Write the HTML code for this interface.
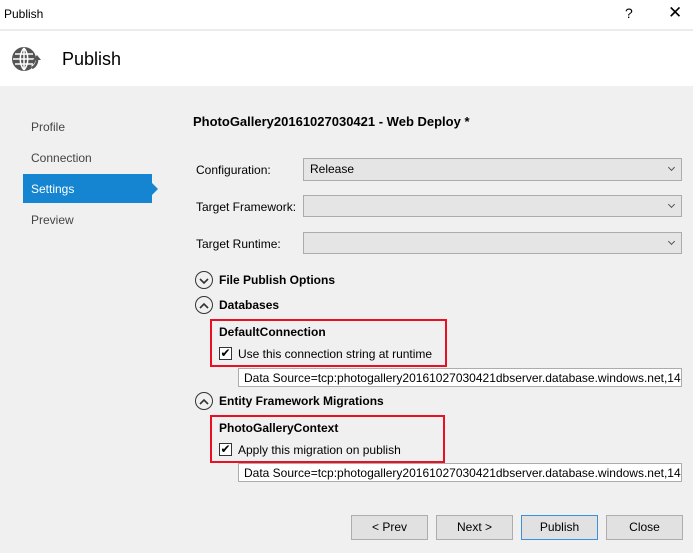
<!DOCTYPE html><html><head><style>
body{margin:0;width:693px;height:553px;background:#f0f0f0;font-family:"Liberation Sans",sans-serif;font-size:12px;color:#000;position:relative;overflow:hidden}
div{position:absolute;box-sizing:border-box}
.t{white-space:nowrap}
.dd{left:303px;width:379px;height:22px;background:#e5e5e5;border:1px solid #acacac;padding:3px 6px}
.dd:after{content:"";position:absolute;right:7px;top:6px;width:4px;height:4px;border-right:1px solid #555;border-bottom:1px solid #555;transform:rotate(45deg)}
.circ{width:18px;height:18px;border:1.5px solid #333;border-radius:50%;left:195px}
.b{font-weight:bold}
.red{border:2px solid #e81123;left:210px;width:237px;height:48px}
.cb{width:13px;height:13px;border:1px solid #333;background:#fff;left:219px;font-size:12px;line-height:11px;text-align:center}
.tb{left:238px;width:444px;height:19px;background:#fff;border:1px solid #acacac;padding:2px 5px;overflow:hidden}
.btn{top:515px;width:77px;height:25px;background:#e1e1e1;border:1px solid #adadad;text-align:center;line-height:23px}
</style></head><body>
<div style="left:0;top:0;width:693px;height:29px;background:#fff"></div>
<div class="t" style="left:4px;top:7px">Publish</div>
<div class="t" style="left:625px;top:5px;font-size:14px">?</div>
<div class="t" style="left:668px;top:3px;font-size:17px">✕</div>
<div style="left:0;top:29px;width:693px;height:57px;background:#fff;border-top:2px solid #ececec"></div>
<svg style="position:absolute;left:10px;top:44px" width="34" height="30" viewBox="0 0 34 30"><circle cx="14" cy="15" r="12" fill="#555"/><path d="M14 4v22M3 15h22M5 10h18M5 20h18M14 4c-5 6-5 16 0 22M14 4c5 6 5 16 0 22" fill="none" stroke="#fff" stroke-width="1.5"/><path d="M22 24a9 9 0 0 0 6-10" fill="none" stroke="#fff" stroke-width="5"/><path d="M22 24a9 9 0 0 0 5-9" fill="none" stroke="#555" stroke-width="2.5"/><path d="M23 16l4-5 4 5z" fill="#555"/></svg>
<div class="t" style="left:62px;top:49px;font-size:18px">Publish</div>
<div class="t" style="left:31px;top:120px;color:#444">Profile</div>
<div class="t" style="left:31px;top:151px;color:#444">Connection</div>
<div style="left:23px;top:174px;width:129px;height:29px;background:#1585d2"></div>
<div style="left:152px;top:183px;width:0;height:0;border-left:6px solid #1585d2;border-top:6px solid transparent;border-bottom:6px solid transparent"></div>
<div class="t" style="left:31px;top:182px;color:#fff">Settings</div>
<div class="t" style="left:31px;top:213px;color:#444">Preview</div>
<div class="t b" style="left:193px;top:114px;font-size:13px">PhotoGallery20161027030421 - Web Deploy *</div>
<div class="t" style="left:196px;top:163px">Configuration:</div>
<div class="dd" style="top:158px;height:23px">Release</div>
<div class="t" style="left:196px;top:200px">Target Framework:</div>
<div class="dd" style="top:195px"></div>
<div class="t" style="left:196px;top:237px">Target Runtime:</div>
<div class="dd" style="top:232px"></div>
<div class="circ" style="top:271px"></div><div class="t b" style="left:219px;top:273px">File Publish Options</div>
<div class="circ" style="top:296px"></div><div class="t b" style="left:219px;top:298px">Databases</div>
<div class="red" style="top:319px"></div>
<div class="t b" style="left:219px;top:325px">DefaultConnection</div>
<div class="cb" style="top:347px">✔</div><div class="t" style="left:238px;top:347px">Use this connection string at runtime</div>
<div class="tb t" style="top:368px">Data Source=tcp:photogallery20161027030421dbserver.database.windows.net,1433</div>
<div class="circ" style="top:392px"></div><div class="t b" style="left:219px;top:394px">Entity Framework Migrations</div>
<div class="red" style="top:415px;width:235px"></div>
<div class="t b" style="left:219px;top:421px">PhotoGalleryContext</div>
<div class="cb" style="top:443px">✔</div><div class="t" style="left:238px;top:443px">Apply this migration on publish</div>
<div class="tb t" style="top:463px">Data Source=tcp:photogallery20161027030421dbserver.database.windows.net,1433</div>
<div class="btn" style="left:351px">&lt; Prev</div>
<div class="btn" style="left:436px">Next &gt;</div>
<div class="btn" style="left:521px;border-color:#3c8fe0">Publish</div>
<div class="btn" style="left:606px">Close</div>
<svg style="position:absolute;left:195px;top:271px" width="18" height="140"><path d="M5 8l4 4 4-4" fill="none" stroke="#333" stroke-width="1.6"/><path d="M5 37l4-4 4 4" fill="none" stroke="#333" stroke-width="1.6"/><path d="M5 133l4-4 4 4" fill="none" stroke="#333" stroke-width="1.6"/></svg>
</body></html>
